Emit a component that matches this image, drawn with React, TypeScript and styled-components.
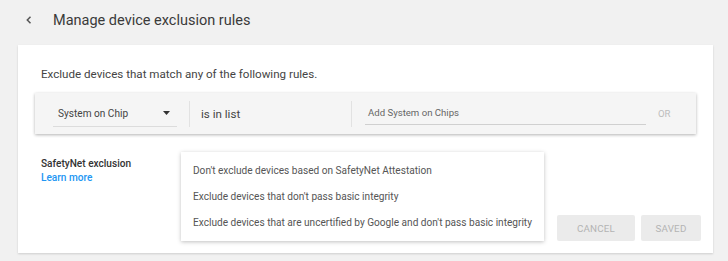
import styled, { createGlobalStyle } from 'styled-components'

const GlobalStyle = createGlobalStyle`
  html, body {
    margin: 0;
    padding: 0;
    background: #f1f1f1;
    font-family: Roboto, 'Liberation Sans', Arial, sans-serif;
  }
`

const Page = styled.div`
  width: 728px;
  height: 261px;
  padding-left: 18px;
  box-sizing: border-box;
  overflow: hidden;
`

const Header = styled.header`
  height: 40px;
  display: flex;
  align-items: center;
`

const BackButton = styled.button`
  width: 31px;
  height: 24px;
  margin-left: 4px;
  padding: 0;
  border: none;
  background: none;
  display: flex;
  align-items: center;
  cursor: pointer;
`

const Title = styled.h1`
  margin: 0;
  font-size: 14.5px;
  font-weight: 400;
  color: #3a3a3a;
`

const Card = styled.section`
  margin-top: 5px;
  width: 695px;
  height: 208px;
  box-sizing: border-box;
  background: #fff;
  padding: 21px 12px 12px 17px;
  box-shadow: 0 1px 2px rgba(0, 0, 0, 0.15);
  display: flex;
  flex-direction: column;
`

const Intro = styled.p`
  margin: 0 0 11px 6px;
  font-size: 11.6px;
  line-height: 16px;
  color: #444;
`

const RuleRow = styled.div`
  height: 41px;
  margin-right: 5px;
  background: #f5f5f5;
  box-shadow: 0 1px 3px rgba(0, 0, 0, 0.3);
  display: flex;
  align-items: center;
  padding-left: 18px;
`

const Select = styled.div`
  width: 124px;
  height: 26px;
  margin-right: 12px;
  box-sizing: border-box;
  border-bottom: 1px solid #dcdcdc;
  display: flex;
  align-items: center;
  justify-content: space-between;
  padding: 0 7px 0 5px;
  font-size: 10.1px;
  color: #444;
`

const Divider = styled.div`
  width: 1px;
  height: 26px;
  background: #e2e2e2;
`

const Operator = styled.div`
  width: 161px;
  padding-left: 11px;
  box-sizing: border-box;
  font-size: 11.6px;
  color: #444;
`

const ChipInput = styled.div`
  margin-left: 13px;
  margin-top: -2px;
  width: 281px;
  height: 24px;
  box-sizing: border-box;
  border-bottom: 1px solid #d0d0d0;
  display: flex;
  align-items: center;
  padding-left: 3px;
  font-size: 9.6px;
  color: #666;
`

const OrLabel = styled.span`
  margin-left: 12px;
  font-size: 9.6px;
  color: #bdbdbd;
`

const Bottom = styled.div`
  flex: 1;
  margin-top: 18px;
  padding-left: 6px;
  display: flex;
  align-items: flex-start;
`

const LabelCol = styled.div`
  width: 140px;
  padding-top: 5px;
  font-size: 10.1px;
  font-weight: 500;
  line-height: 14px;
  color: #333;
`

const LearnMore = styled.a`
  display: block;
  color: #2196f3;
  text-decoration: none;
`

const Menu = styled.ul`
  margin: 0;
  width: 363px;
  height: 89px;
  box-sizing: border-box;
  padding: 5px 0 0;
  list-style: none;
  background: #fff;
  box-shadow: 0 1px 4px rgba(0, 0, 0, 0.25);
`

const MenuItem = styled.li`
  height: 26px;
  display: flex;
  align-items: center;
  padding-left: 12px;
  font-size: 10.1px;
  color: #555;
  white-space: nowrap;
`

const Actions = styled.div`
  margin-left: auto;
  align-self: flex-end;
  display: flex;
  gap: 6px;
`

const FlatButton = styled.button<{ $width: number }>`
  width: ${(p) => p.$width}px;
  height: 26px;
  border: none;
  border-radius: 2px;
  background: #ebebeb;
  color: #b4b4b4;
  font-family: inherit;
  font-size: 9.8px;
  text-transform: uppercase;
  letter-spacing: 0.2px;
`

export default function App() {
  return (
    <>
      <GlobalStyle />
      <Page>
        <Header>
          <BackButton aria-label="Back">
            <svg width="12" height="12" viewBox="0 0 12 12">
              <path d="M8.5 2.8 L5.3 6 L8.5 9.2" fill="none" stroke="#555" strokeWidth="1.5" />
            </svg>
          </BackButton>
          <Title>Manage device exclusion rules</Title>
        </Header>
        <Card>
          <Intro>Exclude devices that match any of the following rules.</Intro>
          <RuleRow>
            <Select>
              <span>System on Chip</span>
              <svg width="7" height="4" viewBox="0 0 7 4">
                <path d="M0 0 H7 L3.5 4 Z" fill="#333" />
              </svg>
            </Select>
            <Divider />
            <Operator>is in list</Operator>
            <Divider />
            <ChipInput>Add System on Chips</ChipInput>
            <OrLabel>OR</OrLabel>
          </RuleRow>
          <Bottom>
            <LabelCol>
              SafetyNet exclusion
              <LearnMore href="#">Learn more</LearnMore>
            </LabelCol>
            <Menu>
              <MenuItem>Don't exclude devices based on SafetyNet Attestation</MenuItem>
              <MenuItem>Exclude devices that don't pass basic integrity</MenuItem>
              <MenuItem>Exclude devices that are uncertified by Google and don't pass basic integrity</MenuItem>
            </Menu>
            <Actions>
              <FlatButton $width={78}>Cancel</FlatButton>
              <FlatButton $width={60}>Saved</FlatButton>
            </Actions>
          </Bottom>
        </Card>
      </Page>
    </>
  )
}
